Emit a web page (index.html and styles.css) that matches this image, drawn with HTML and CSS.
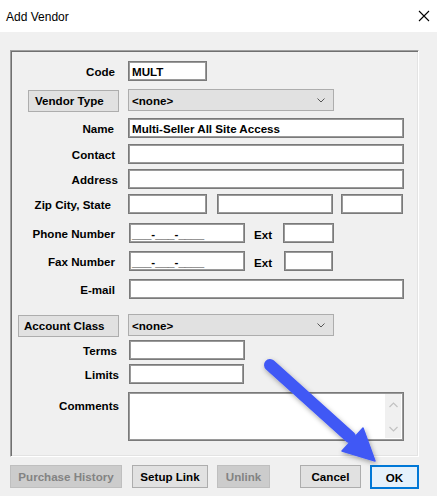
FILE: index.html
```
<!DOCTYPE html>
<html>
<head>
<meta charset="utf-8">
<link rel="stylesheet" href="styles.css">
</head>
<body>
<div class="dialog">
  <div class="titlebar">
    <span class="title">Add Vendor</span>
    <svg class="close" width="12" height="12" viewBox="0 0 12 12"><path d="M1 1L11 11M11 1L1 11" stroke="#000" stroke-width="1.1" fill="none"/></svg>
  </div>
  <div class="client">
    <div class="group">
      <div class="row h20 g10">
        <div class="lbl">Code</div>
        <div class="field w79">MULT</div>
      </div>
      <div class="row h22 g8">
        <div class="lbl"><div class="btn b-vt">Vendor Type</div></div>
        <div class="combo"><span>&lt;none&gt;</span><svg width="8" height="5" viewBox="0 0 8 5"><path d="M0.5 0.5L4 4L7.5 0.5" stroke="#555" stroke-width="1" fill="none"/></svg></div>
      </div>
      <div class="row h20 g7">
        <div class="lbl pr5">Name</div>
        <div class="field w276">Multi-Seller All Site Access</div>
      </div>
      <div class="row h20 g6">
        <div class="lbl">Contact</div>
        <div class="field w276"></div>
      </div>
      <div class="row h20 g5">
        <div class="lbl pr1">Address</div>
        <div class="field w276"></div>
      </div>
      <div class="row h20 g5">
        <div class="lbl pr8">Zip City, State</div>
        <div class="field w79"></div>
        <div class="field w116 ml10"></div>
        <div class="field w62 ml8"></div>
      </div>
      <div class="row h20 g9">
        <div class="lbl">Phone Number</div>
        <div class="field w116 ml1 mask">___-___-____</div>
        <div class="ext">Ext</div>
        <div class="field w51"></div>
      </div>
      <div class="row h20 g8">
        <div class="lbl">Fax Number</div>
        <div class="field w116 ml1 mask">___-___-____</div>
        <div class="ext">Ext</div>
        <div class="field w49 ml1"></div>
      </div>
      <div class="row h20 g8">
        <div class="lbl">E-mail</div>
        <div class="field w275 ml1"></div>
      </div>
      <div class="row h22 g15">
        <div class="lbl"><div class="btn b-ac">Account Class</div></div>
        <div class="combo"><span>&lt;none&gt;</span><svg width="8" height="5" viewBox="0 0 8 5"><path d="M0.5 0.5L4 4L7.5 0.5" stroke="#555" stroke-width="1" fill="none"/></svg></div>
      </div>
      <div class="row h20 g4">
        <div class="lbl pr2">Terms</div>
        <div class="field w116 ml1"></div>
      </div>
      <div class="row h20 g4">
        <div class="lbl pr0">Limits</div>
        <div class="field w115 ml1"></div>
      </div>
      <div class="row top g8">
        <div class="lbl pr0 lbl-top">Comments</div>
        <div class="memo">
          <div class="vscroll">
            <svg width="9" height="6" viewBox="0 0 9 6"><path d="M0.5 5L4.5 1L8.5 5" stroke="#c2c2c2" stroke-width="1.2" fill="none"/></svg>
            <svg width="9" height="6" viewBox="0 0 9 6"><path d="M0.5 1L4.5 5L8.5 1" stroke="#c2c2c2" stroke-width="1.2" fill="none"/></svg>
          </div>
        </div>
      </div>
    </div>
    <div class="buttons">
      <div class="btn wide disabled w112">Purchase History</div>
      <div class="btn wide w76 ml10">Setup Link</div>
      <div class="btn wide disabled w53 ml9">Unlink</div>
      <div class="spacer"></div>
      <div class="btn wide w61">Cancel</div>
      <div class="btn wide ok w49 ml9">OK</div>
    </div>
  </div>
  <svg class="arrow" width="437" height="496" viewBox="0 0 437 496">
    <defs>
      <filter id="sh" x="-20%" y="-20%" width="140%" height="140%">
        <feDropShadow dx="1" dy="2" stdDeviation="2.5" flood-color="#000" flood-opacity="0.35"/>
      </filter>
    </defs>
    <g filter="url(#sh)" fill="#4059f5" stroke="#4059f5">
      <path d="M270 365L350 437" stroke-width="12" stroke-linecap="round" fill="none"/>
      <path d="M342 451L363 428L375 461Z" stroke-width="1.5" stroke-linejoin="round"/>
    </g>
  </svg>
</div>
</body>
</html>
```
FILE: styles.css
```
* { box-sizing: border-box; }
html, body { margin: 0; padding: 0; }
body {
  width: 437px;
  height: 496px;
  overflow: hidden;
  background: #f0f0f0;
  font-family: "Liberation Sans", Arial, sans-serif;
  font-size: 11.6px;
  font-weight: bold;
  color: #000;
}
.dialog { position: relative; width: 437px; height: 496px; }
.titlebar {
  height: 32px;
  background: #fff;
  display: flex;
  align-items: center;
  padding: 0 0 0 6px;
}
.title { font-weight: normal; font-size: 12px; flex: 1; padding-top: 1px; }
.close { margin-right: 7px; margin-top: 0; }
.client { padding-top: 18px; }
.group {
  margin-left: 10px;
  width: 409px;
  height: 407px;
  border: 1px solid;
  border-color: #a0a0a0 #ffffff #ffffff #a0a0a0;
  box-shadow: inset 1px 1px 0 #707070, inset -1px -1px 0 #e3e3e3;
  padding: 0 0 0 1px;
  display: flex;
  flex-direction: column;
}
.row { display: flex; align-items: center; }
.row.top { align-items: flex-start; }
.h20 { height: 20px; }
.h22 { height: 22px; }
.g4 { margin-top: 4px; }
.g5 { margin-top: 5px; }
.g6 { margin-top: 6px; }
.g7 { margin-top: 7px; }
.g8 { margin-top: 8px; }
.g9 { margin-top: 9px; }
.g10 { margin-top: 10px; }
.g15 { margin-top: 15px; }
.lbl {
  width: 107px;
  flex: none;
  text-align: right;
  padding-right: 4px;
  margin-right: 9px;
  display: flex;
  justify-content: flex-end;
  align-items: center;
  white-space: nowrap;
  padding-top: 1px;
}
.lbl-top { padding-top: 7px; }
.pr0 { padding-right: 0; }
.pr1 { padding-right: 1px; }
.pr2 { padding-right: 2px; }
.pr5 { padding-right: 5px; }
.pr8 { padding-right: 8px; }
.lbl .btn { margin-right: -4px; }
.field {
  height: 20px;
  background: #fff;
  border: 1px solid #7a7a7a;
  box-shadow: inset 1px 1px 0 #9a9a9a, inset -1px -1px 0 #9a9a9a;
  padding: 0 3px;
  display: flex;
  align-items: center;
  white-space: nowrap;
  flex: none;
}
.mask { padding-left: 2px; letter-spacing: 0; }
.w49 { width: 49px; }
.w51 { width: 51px; }
.w53 { width: 53px; }
.w61 { width: 61px; }
.w62 { width: 62px; }
.w76 { width: 76px; }
.w79 { width: 79px; }
.w112 { width: 112px; }
.w115 { width: 115px; }
.w116 { width: 116px; }
.w275 { width: 275px; }
.w276 { width: 276px; }
.ml1 { margin-left: 1px; }
.ml8 { margin-left: 8px; }
.ml9 { margin-left: 9px; }
.ml10 { margin-left: 10px; }
.ext { width: 38px; padding-left: 9px; flex: none; padding-top: 2px; }
.btn {
  height: 22px;
  background: #e1e1e1;
  border: 1px solid #adadad;
  display: flex;
  align-items: center;
  justify-content: center;
  white-space: nowrap;
  flex: none;
}
.b-vt { width: 91px; justify-content: flex-start; padding-left: 6px; }
.b-ac { width: 101px; justify-content: flex-start; padding-left: 5px; }
.combo {
  width: 206px;
  height: 22px;
  background: #e1e1e1;
  border: 1px solid #adadad;
  display: flex;
  align-items: center;
  justify-content: space-between;
  padding: 0 8px 0 3px;
  flex: none;
}
.combo svg { margin-top: 1px; }
.memo {
  width: 276px;
  height: 49px;
  background: #fff;
  border: 1px solid #7a7a7a;
  box-shadow: inset 1px 1px 0 #9a9a9a, inset -1px -1px 0 #9a9a9a;
  display: flex;
  justify-content: flex-end;
  padding: 1px 2px 2px 0;
  flex: none;
}
.vscroll {
  width: 16px;
  height: 100%;
  background: #f0f0f0;
  display: flex;
  flex-direction: column;
  justify-content: space-between;
  align-items: center;
  padding: 8px 0 6px;
}
.buttons {
  display: flex;
  margin: 8px 18px 0 10px;
  height: 24px;
  align-items: flex-start;
}
.buttons .btn { height: 23px; }
.spacer { flex: 1; }
.btn.disabled {
  background: #cccccc;
  border-color: #bfbfbf;
  color: #838383;
}
.btn.ok {
  height: 24px;
  background: #e5f1fb;
  border: 2px solid #0078d7;
}
.arrow { position: absolute; left: 0; top: 0; pointer-events: none; }
```
